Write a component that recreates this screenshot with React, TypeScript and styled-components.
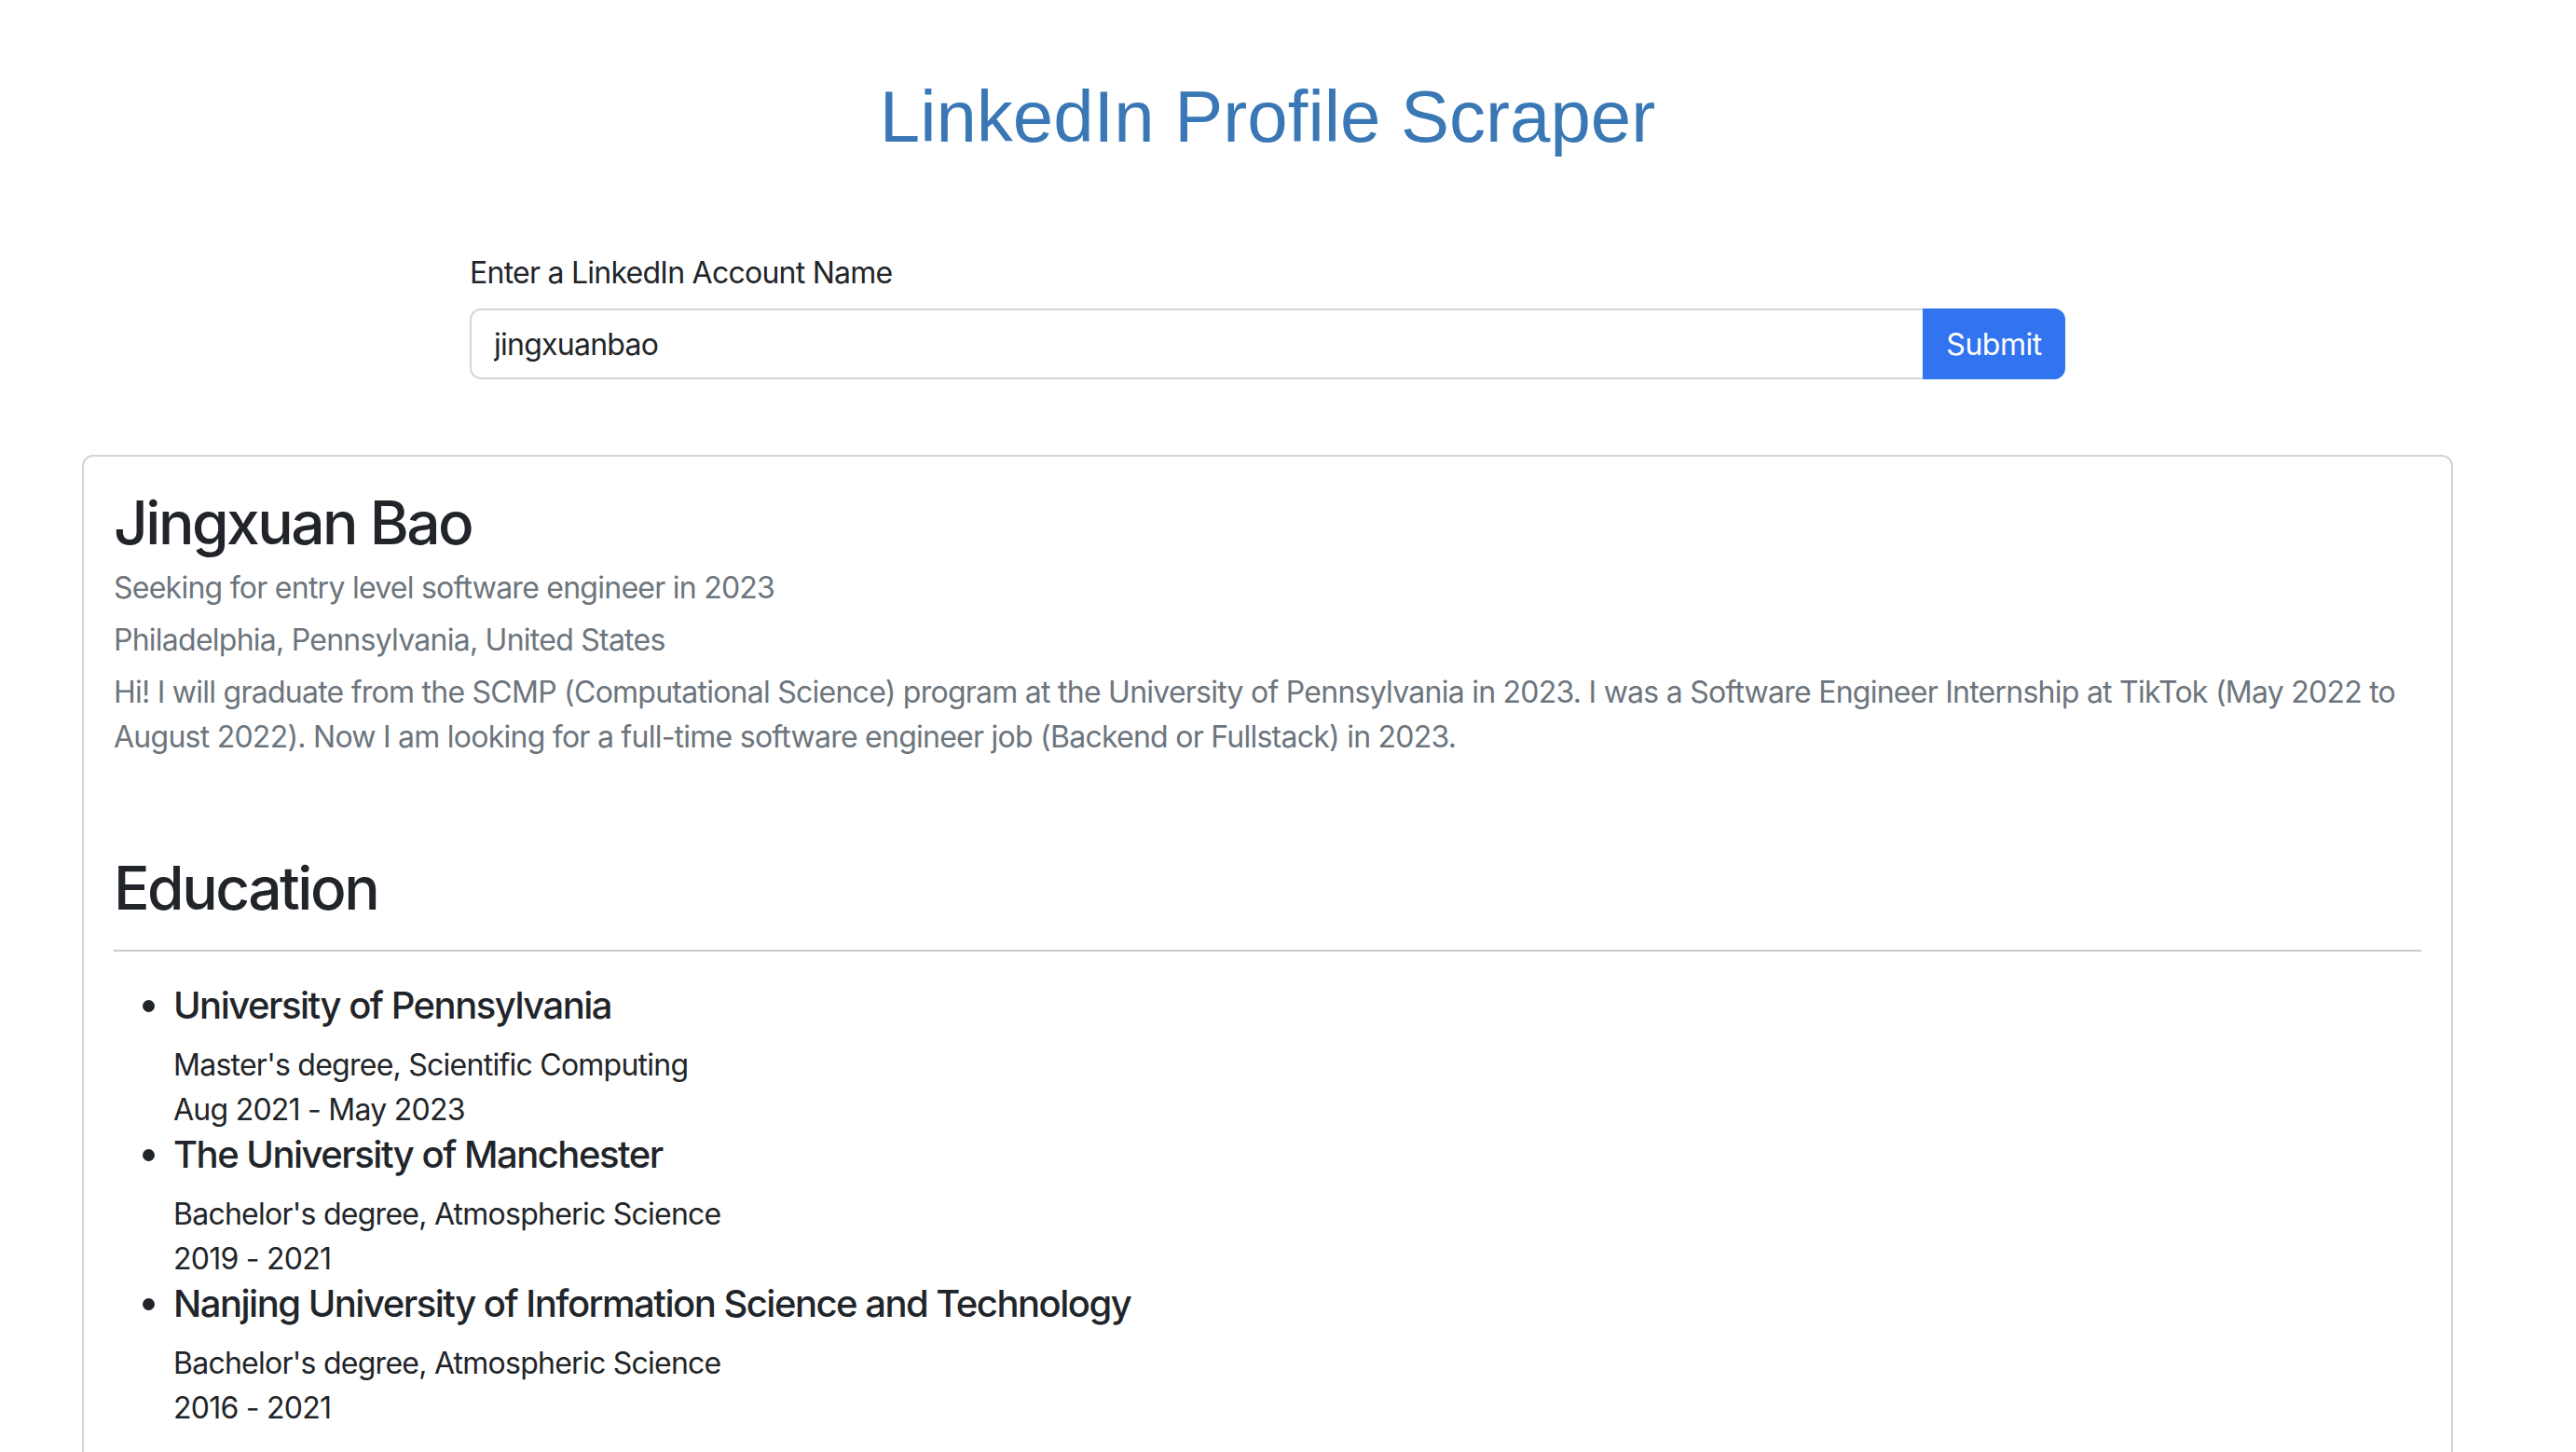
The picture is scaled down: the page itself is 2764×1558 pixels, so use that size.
import React from "react";
import styled, { createGlobalStyle } from "styled-components";

const GlobalStyle = createGlobalStyle`
  html, body {
    margin: 0;
    padding: 0;
    background: #ffffff;
  }
  body {
    font-family: Inter, "Noto Sans", "Liberation Sans", sans-serif;
    color: #212529;
    letter-spacing: -0.75px;
    -webkit-font-smoothing: antialiased;
  }
  * { box-sizing: border-box; }
`;

const Page = styled.div`
  width: 2720px;
  display: flex;
  flex-direction: column;
  align-items: center;
  padding-top: 77px;
`;

const Title = styled.h1`
  margin: 0;
  font-family: "Liberation Sans", Arial, sans-serif;
  font-size: 78px;
  font-weight: 400;
  line-height: 96px;
  letter-spacing: 0;
  color: #3a78b5;
  text-align: center;
`;

const SearchForm = styled.form`
  width: 1712px;
  margin-top: 96px;
  display: flex;
  flex-direction: column;
`;

const Label = styled.label`
  font-size: 32px;
  line-height: 48px;
  color: #212529;
  margin-bottom: 14px;
`;

const InputGroup = styled.div`
  display: flex;
  height: 76px;
`;

const TextInput = styled.input`
  flex: 1;
  min-width: 0;
  height: 76px;
  padding: 12px 24px;
  font-family: inherit;
  font-size: 32px;
  letter-spacing: -0.75px;
  color: #212529;
  background: #fff;
  border: 2px solid #d4d6d8;
  border-right: none;
  border-radius: 12px 0 0 12px;
  outline: none;
`;

const SubmitButton = styled.button`
  width: 153px;
  height: 76px;
  padding: 12px 24px;
  font-family: inherit;
  font-size: 32px;
  letter-spacing: -0.5px;
  color: #fff;
  background: #3273f0;
  border: none;
  border-radius: 0 12px 12px 0;
  cursor: pointer;
`;

const Card = styled.section`
  align-self: stretch;
  margin: 81px 88px 0;
  border: 2px solid #d3d3d3;
  border-radius: 12px;
  padding: 32px 32px 120px;
  display: flex;
  flex-direction: column;
`;

const Name = styled.h2`
  margin: 0 0 8px;
  font-size: 64px;
  font-weight: 500;
  line-height: 77px;
  letter-spacing: -2.5px;
  color: #212529;
`;

const Muted = styled.p<{ $gap?: number }>`
  margin: 0 0 ${(p) => p.$gap ?? 8}px;
  font-size: 32px;
  line-height: 48px;
  color: #6c757d;
`;

const SectionTitle = styled.h2`
  margin: 99px 0 0;
  font-size: 64px;
  font-weight: 500;
  line-height: 77px;
  letter-spacing: -2.5px;
  color: #212529;
`;

const Rule = styled.hr`
  margin: 28px 0 34px;
  border: none;
  border-top: 2px solid #c9cacb;
  height: 0;
`;

const List = styled.ul`
  margin: 0;
  padding-left: 64px;
  list-style: disc;
`;

const Item = styled.li`
  font-size: 40px;
  line-height: 48px;
  color: #212529;
`;

const School = styled.h5`
  margin: 0 0 16px;
  font-size: 40px;
  font-weight: 500;
  line-height: 48px;
  letter-spacing: -1.5px;
  color: #212529;
`;

const Detail = styled.p`
  margin: 0;
  font-size: 32px;
  line-height: 48px;
  color: #212529;
`;

const education = [
  {
    school: "University of Pennsylvania",
    degree: "Master's degree, Scientific Computing",
    dates: "Aug 2021 - May 2023",
  },
  {
    school: "The University of Manchester",
    degree: "Bachelor's degree, Atmospheric Science",
    dates: "2019 - 2021",
  },
  {
    school: "Nanjing University of Information Science and Technology",
    degree: "Bachelor's degree, Atmospheric Science",
    dates: "2016 - 2021",
  },
];

export default function App() {
  return (
    <>
      <GlobalStyle />
      <Page>
        <Title>LinkedIn Profile Scraper</Title>
        <SearchForm onSubmit={(e) => e.preventDefault()}>
          <Label htmlFor="account">Enter a LinkedIn Account Name</Label>
          <InputGroup>
            <TextInput id="account" defaultValue="jingxuanbao" />
            <SubmitButton type="submit">Submit</SubmitButton>
          </InputGroup>
        </SearchForm>
        <Card>
          <Name>Jingxuan Bao</Name>
          <Muted>Seeking for entry level software engineer in 2023</Muted>
          <Muted>Philadelphia, Pennsylvania, United States</Muted>
          <Muted $gap={0}>
            Hi! I will graduate from the SCMP (Computational Science) program at the University of
            Pennsylvania in 2023. I was a Software Engineer Internship at TikTok (May 2022 to August
            2022). Now I am looking for a full-time software engineer job (Backend or Fullstack) in
            2023.
          </Muted>
          <SectionTitle>Education</SectionTitle>
          <Rule />
          <List>
            {education.map((e) => (
              <Item key={e.school}>
                <School>{e.school}</School>
                <Detail>{e.degree}</Detail>
                <Detail>{e.dates}</Detail>
              </Item>
            ))}
          </List>
        </Card>
      </Page>
    </>
  );
}
